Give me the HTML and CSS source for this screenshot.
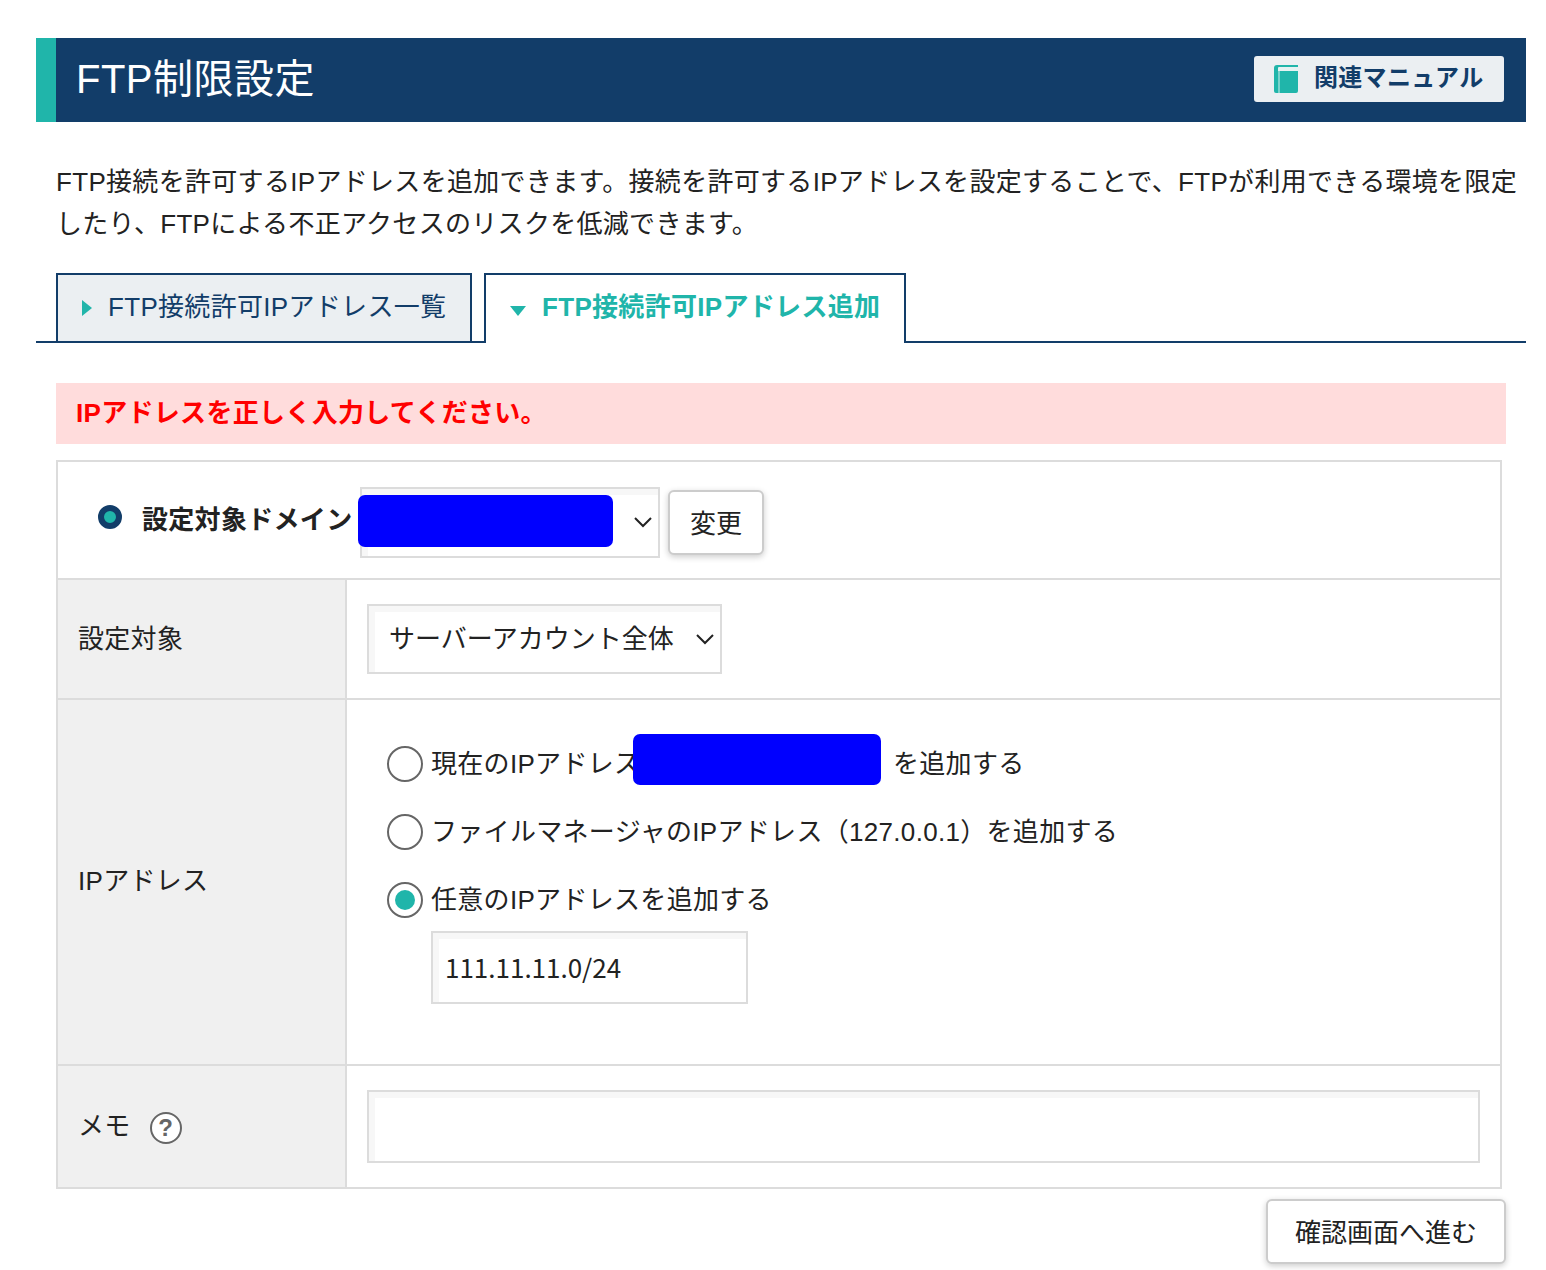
FILE: index.html
```html
<!DOCTYPE html>
<html lang="ja">
<head>
<meta charset="utf-8">
<title>FTP制限設定</title>
<link rel="stylesheet" href="styles.css">
</head>
<body>
<main class="page">
  <header class="title-bar">
    <h1 class="title">FTP制限設定</h1>
    <a class="manual">
      <svg class="manual-icon" viewBox="0 0 24 28" width="24" height="28"><path fill="#20b5aa" d="M3 0h21v26a2 2 0 0 1-2 2H2a2 2 0 0 1-2-2V3a3 3 0 0 1 3-3z"/><path fill="#79d3cc" d="M4 5h2v23H4z"/><path fill="#e4f2f2" d="M5 2h19v4H4V3a1 1 0 0 1 1-1z"/></svg>
      <span class="manual-label">関連マニュアル</span>
    </a>
  </header>

  <p class="lead">FTP接続を許可するIPアドレスを追加できます。接続を許可するIPアドレスを設定することで、FTPが利用できる環境を限定したり、FTPによる不正アクセスのリスクを低減できます。</p>

  <nav class="tabs">
    <span class="line line-start"></span>
    <a class="tab"><span class="arrow-right"></span>FTP接続許可IPアドレス一覧</a>
    <span class="line line-gap"></span>
    <a class="tab tab-active"><span class="arrow-down"></span>FTP接続許可IPアドレス追加</a>
    <span class="line line-end"></span>
  </nav>

  <div class="error">IPアドレスを正しく入力してください。</div>

  <form class="panel">
    <div class="domain-row">
      <span class="bullet"></span>
      <b class="domain-label">設定対象ドメイン</b>
      <div class="field domain-select"><span class="mask mask-domain"></span>
        <svg class="chevron" viewBox="0 0 18 12" width="18" height="12"><path d="M1 2l8 8 8-8" fill="none" stroke="#222" stroke-width="2"/></svg>
      </div>
      <button class="button change" type="button">変更</button>
    </div>
    <div class="row row-target">
      <div class="head">設定対象</div>
      <div class="cell">
        <div class="field target-select"><span>サーバーアカウント全体</span>
          <svg class="chevron" viewBox="0 0 18 12" width="18" height="12"><path d="M1 2l8 8 8-8" fill="none" stroke="#222" stroke-width="2"/></svg>
        </div>
      </div>
    </div>
    <div class="row row-ip">
      <div class="head">IPアドレス</div>
      <div class="cell options">
        <label class="option"><span class="radio"></span><span class="current">現在のIPアドレス<span class="mask mask-ip"></span></span><span class="after">を追加する</span></label>
        <label class="option"><span class="radio"></span>ファイルマネージャのIPアドレス（127.0.0.1）を追加する</label>
        <label class="option"><span class="radio radio-on"></span>任意のIPアドレスを追加する</label>
        <div class="field ip-input">111.11.11.0/24</div>
      </div>
    </div>
    <div class="row row-memo">
      <div class="head">メモ<span class="help">?</span></div>
      <div class="cell"><div class="field memo-input"></div></div>
    </div>
  </form>

  <div class="actions"><button class="button submit" type="button">確認画面へ進む</button></div>
</main>
</body>
</html>
```
FILE: styles.css
```css
* { box-sizing: border-box; }
body {
  margin: 0;
  background: #fff;
  color: #222;
  font: 26px/42px "Liberation Sans", "Noto Sans CJK JP", sans-serif;
  letter-spacing: 0.31px;
}
.page { width: 1546px; height: 1270px; padding: 38px 20px 0 36px; overflow: hidden; }

.title-bar {
  display: flex;
  justify-content: space-between;
  align-items: flex-start;
  height: 84px;
  padding: 18px 22px 0 20px;
  border-left: 20px solid #20b5aa;
  background: #123d69;
}
.title {
  margin: -7px 0 0;
  color: #fff;
  font-size: 40px;
  font-weight: 400;
  line-height: 60px;
  letter-spacing: 0.5px;
}
.manual {
  display: flex;
  width: 250px;
  height: 46px;
  padding: 9px 0 0 20px;
  border-radius: 3px;
  background: #ebeff2;
  color: #123d69;
  font-size: 24px;
  font-weight: 700;
  line-height: 46px;
}
.manual-label { margin: -10px 0 0 16px; }

.lead { width: 1470px; height: 84px; margin: 39px 0 0 20px; }

.tabs { display: flex; height: 70px; margin-top: 28px; line-height: 64px; }
.line { border-bottom: 2px solid #123d69; }
.line-start { width: 20px; }
.line-gap { width: 12px; }
.line-end { flex: 1; }
.tab {
  display: flex;
  width: 416px;
  padding-left: 24px;
  border: 2px solid #123d69;
  background: #ebeff2;
  color: #123d69;
}
.tab-active { width: 422px; border-bottom: 0; background: #fff; color: #20b5aa; font-weight: 700; }
.arrow-right {
  height: 16px;
  margin: 25px 16px 0 0;
  border: solid transparent;
  border-width: 8px 0 8px 10px;
  border-left-color: #20b5aa;
}
.arrow-down {
  height: 10px;
  margin: 31px 16px 0 0;
  border: solid transparent;
  border-width: 10px 8px 0;
  border-top-color: #20b5aa;
}

.error {
  width: 1450px;
  height: 61px;
  margin: 40px 0 0 20px;
  padding-left: 20px;
  background: #ffdcdc;
  color: #f00;
  font-weight: 700;
  line-height: 60px;
}

.panel { width: 1446px; margin: 16px 0 0 20px; border: 2px solid #dcdcdc; border-bottom: 0; }
.domain-row {
  display: flex;
  align-items: flex-start;
  height: 118px;
  padding: 25px 0 0 40px;
  border-bottom: 2px solid #dcdcdc;
}
.bullet {
  width: 24px;
  height: 24px;
  margin-top: 18px;
  border: 6px solid #123d69;
  border-radius: 50%;
  background: #20b5aa;
}
.domain-label { width: 218px; margin: 12px 0 0 20px; white-space: nowrap; }
.field {
  position: relative;
  border: 2px solid #dcdcdc;
  background: #fff;
  box-shadow: inset 6px 6px 0 #f7f7f7;
  letter-spacing: 0;
}
.domain-select {
  display: flex;
  align-items: center;
  justify-content: flex-end;
  width: 300px;
  height: 71px;
  padding: 0 6px 1px 0;
}
.mask { position: absolute; border-radius: 7px; background: #00f; }
.mask-domain { left: -4px; top: 6px; width: 255px; height: 52px; }
.button {
  padding: 2px 0 0;
  border: 2px solid #ccc;
  border-radius: 6px;
  background: #fff;
  color: #222;
  box-shadow: 0 2px 6px rgba(0, 0, 0, 0.2);
  font: inherit;
  letter-spacing: 0;
}
.change { width: 96px; height: 65px; margin: 3px 0 0 8px; }

.row { display: flex; border-bottom: 2px solid #dcdcdc; }
.row-target { height: 120px; }
.row-ip { height: 366px; }
.row-memo { height: 123px; }
.head {
  display: flex;
  align-items: center;
  width: 289px;
  padding-left: 20px;
  border-right: 2px solid #dcdcdc;
  background: #f0f0f0;
}
.row-ip .head, .row-memo .head { padding-bottom: 2px; }
.cell { flex: 1; padding: 24px 20px 0; }
.target-select {
  display: flex;
  align-items: center;
  justify-content: space-between;
  width: 355px;
  height: 70px;
  padding: 0 6px 0 20px;
}
.options { padding: 42px 40px 0; }
.option { display: flex; align-items: center; height: 44px; margin-bottom: 24px; }
.option:nth-child(3) { margin-bottom: 9px; }
.radio { width: 36px; height: 36px; margin-right: 8px; border: 2px solid #666; border-radius: 50%; }
.radio-on { padding: 6px; background: #20b5aa content-box; }
.current { position: relative; width: 462px; }
.mask-ip { left: 202px; top: -9px; width: 248px; height: 51px; }
.ip-input {
  width: 317px;
  height: 73px;
  margin-left: 44px;
  padding-left: 12px;
  font-family: "Noto Sans CJK JP", sans-serif;
  line-height: 67px;
}
.memo-input { width: 1113px; height: 73px; }
.help {
  width: 32px;
  height: 32px;
  margin: 5px 0 0 19px;
  border: 2px solid #666;
  border-radius: 50%;
  background: #fff;
  color: #666;
  font-size: 24px;
  font-weight: 700;
  line-height: 28px;
  text-align: center;
}
.actions { display: flex; justify-content: flex-end; padding: 10px 20px 0 0; }
.submit { width: 240px; height: 65px; }
```
